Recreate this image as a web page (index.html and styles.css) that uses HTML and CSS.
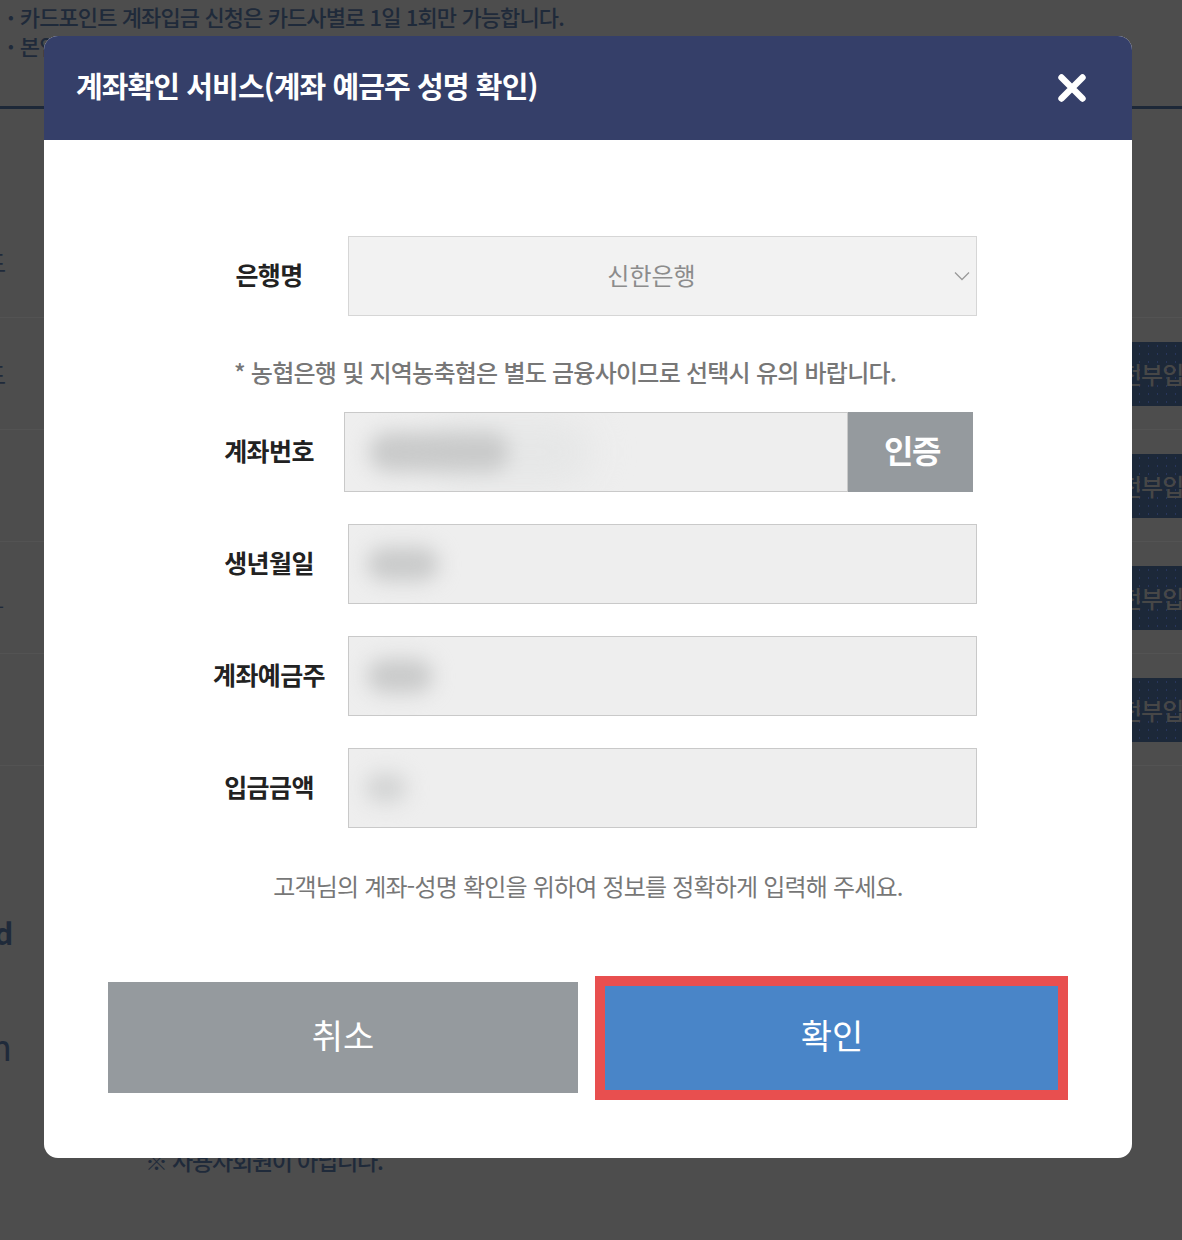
FILE: index.html
```html
<!DOCTYPE html>
<html lang="ko">
<head>
<meta charset="utf-8">
<title>계좌확인 서비스</title>
<link rel="stylesheet" href="styles.css">
</head>
<body>
<div class="page">
  <ul class="notice">
    <li>카드포인트 계좌입금 신청은 카드사별로 1일 1회만 가능합니다.</li>
    <li>본인 명의의 계좌로만 입금이 가능합니다.</li>
  </ul>
  <div class="divider"></div>
  <div class="rows">
    <div class="row"><span class="frag">코드</span></div>
    <div class="row"><span class="frag">코드</span><span class="pbtn">전부입금</span></div>
    <div class="row"><span class="pbtn">전부입금</span></div>
    <div class="row"><span class="frag frag-dash">-</span><span class="pbtn">전부입금</span></div>
    <div class="row"><span class="pbtn">전부입금</span></div>
  </div>
  <div class="lower">
    <p class="lower-d">d</p>
    <p class="lower-n">n</p>
    <p class="lower-note">※ 사용자회원이 아닙니다.</p>
  </div>
</div>

<div class="modal" role="dialog" aria-labelledby="modal-title">
  <div class="modal-head">
    <h2 class="modal-title" id="modal-title">계좌확인 서비스(계좌 예금주 성명 확인)</h2>
    <button class="close" type="button" aria-label="닫기">
      <svg width="30" height="30" viewBox="0 0 30 30"><path d="M4.5 4.5 L25.5 25.5 M25.5 4.5 L4.5 25.5" stroke="#fff" stroke-width="6.4" stroke-linecap="round" fill="none"/></svg>
    </button>
  </div>
  <div class="modal-body">
    <div class="form">
      <div class="frow">
        <label class="flabel">은행명</label>
        <div class="select">
          <span class="select-text">신한은행</span>
          <svg class="chev" width="16" height="10" viewBox="0 0 16 10"><polyline points="1,1.5 8,8.5 15,1.5" fill="none" stroke="#9a9a9a" stroke-width="1.3"/></svg>
        </div>
      </div>
      <p class="fnote">* 농협은행 및 지역농축협은 별도 금융사이므로 선택시 유의 바랍니다.</p>
      <div class="frow">
        <label class="flabel">계좌번호</label>
        <div class="field-acct">
          <div class="input"><span class="blur blur-acct"></span></div>
          <button class="verify" type="button">인증</button>
        </div>
      </div>
      <div class="frow frow-gap">
        <label class="flabel">생년월일</label>
        <div class="input input-full"><span class="blur blur-birth"></span></div>
      </div>
      <div class="frow frow-gap">
        <label class="flabel">계좌예금주</label>
        <div class="input input-full"><span class="blur blur-holder"></span></div>
      </div>
      <div class="frow frow-gap">
        <label class="flabel">입금금액</label>
        <div class="input input-full"><span class="blur blur-amount"></span></div>
      </div>
    </div>
    <p class="info">고객님의 계좌-성명 확인을 위하여 정보를 정확하게 입력해 주세요.</p>
    <div class="actions">
      <button class="btn btn-cancel" type="button">취소</button>
      <div class="confirm-wrap">
        <button class="btn btn-confirm" type="button">확인</button>
        <span class="highlight"></span>
      </div>
    </div>
  </div>
</div>
</body>
</html>
```

FILE: styles.css
```css
* { box-sizing: border-box; }
html, body { margin: 0; padding: 0; }
body {
  width: 1182px;
  height: 1240px;
  overflow: hidden;
  position: relative;
  background: #4d4d4d;
  font-family: "Noto Sans CJK KR", "Noto Sans", sans-serif;
}

/* dimmed page behind the dialog */
.page { color: #1f2a3a; }
.notice {
  list-style: none;
  margin: 0;
  padding: 2px 0 0 8px;
  font-size: 22px;
  line-height: 29px;
  letter-spacing: -0.9px;
  font-weight: 500;
}
.notice li { height: 29px; white-space: nowrap; }
.notice li::before { content: "•"; margin-right: 7px; font-size: 16px; line-height: 1; vertical-align: 3px; }
.divider { margin-top: 46px; height: 3px; background: #1d2838; }
.rows { margin-top: 97px; }
.row {
  height: 112px;
  border-bottom: 1px solid #535353;
  display: flex;
  align-items: center;
  overflow: hidden;
}
.frag { margin-left: -37px; font-size: 24px; line-height: 30px; letter-spacing: -1px; }
.frag-dash { margin-left: -3px; font-size: 20px; padding-top: 18px; }
.pbtn {
  margin-left: auto;
  margin-right: -60px;
  width: 170px;
  height: 64px;
  padding-left: 48px;
  display: flex;
  align-items: center;
  background-color: #1c2839;
  background-image: radial-gradient(#28365c 0.6px, transparent 0.9px);
  background-size: 9px 8px;
  color: #474747;
  font-size: 24px;
  letter-spacing: -1px;
  font-weight: 500;
}
.lower p { margin: 0; }
.lower-d { margin-top: 146px !important; height: 40px; line-height: 40px; font-size: 30px; font-weight: 700; margin-left: -6px !important; }
.lower-n { margin-top: 73px !important; height: 40px; line-height: 40px; font-size: 36px; margin-left: -10px !important; }
.lower-note { margin-top: 77px !important; margin-left: 145px !important; font-size: 23px; line-height: 36px; letter-spacing: -1.2px; font-weight: 500; }

/* dialog */
.modal {
  position: absolute;
  left: 44px;
  top: 36px;
  width: 1088px;
  background: #fff;
  border-radius: 14px;
  overflow: hidden;
}
.modal-head {
  height: 104px;
  background: #353f69;
  display: flex;
  align-items: center;
  justify-content: space-between;
  padding: 0 45px 0 32px;
}
.modal-title {
  margin: 0 0 6px;
  color: #fff;
  font-size: 29px;
  line-height: 40px;
  font-weight: 700;
  letter-spacing: -0.9px;
}
.close {
  width: 30px;
  height: 30px;
  padding: 0;
  border: 0;
  background: none;
  display: block;
}
.close svg { display: block; }

.modal-body { padding: 96px 0 65px; }
.form { width: 787px; margin-left: 146px; }
.frow { display: flex; align-items: center; height: 80px; }
.frow-gap { margin-top: 32px; }
.flabel {
  width: 158px;
  flex: none;
  text-align: center;
  font-size: 25px;
  font-weight: 700;
  letter-spacing: -0.6px;
  color: #222;
  line-height: 34px;
  padding-bottom: 4px;
}
.select {
  flex: 1;
  height: 80px;
  background: #f2f2f2;
  border: 1px solid #d6d6d6;
  display: grid;
  grid-template-columns: 1fr 16px;
  align-items: center;
  padding-right: 6px;
}
.select-text {
  text-align: center;
  font-size: 24px;
  line-height: 34px;
  letter-spacing: 0;
  color: #8c8c8c;
  padding-bottom: 3px;
}
.chev { display: block; }
.fnote {
  margin: 38px 0 22px;
  padding-left: 44px;
  font-size: 24px;
  line-height: 36px;
  font-weight: 500;
  letter-spacing: -0.75px;
  color: #777;
}
.field-acct {
  flex: 1;
  display: flex;
  height: 80px;
  margin-left: -4px;
  margin-right: 4px;
}
.input {
  flex: 1;
  height: 80px;
  background: #eeeeee;
  border: 1px solid #c9c9c9;
  display: flex;
  align-items: center;
  overflow: hidden;
}
.verify {
  width: 125px;
  flex: none;
  height: 80px;
  border: 0;
  background: #959a9e;
  color: #fff;
  font-family: inherit;
  font-size: 32px;
  font-weight: 700;
  letter-spacing: -1.5px;
  padding: 0 0 6px 3px;
}
.blur {
  display: block;
  background: #c9caca;
  border-radius: 22px;
  filter: blur(10px);
}
.blur-acct { width: 140px; height: 40px; margin-left: 24px; box-shadow: 70px 0 30px 14px #e6e7e7; }
.blur-birth { width: 72px; height: 34px; margin-left: 18px; }
.blur-holder { width: 66px; height: 34px; margin-left: 18px; }
.blur-amount { width: 42px; height: 30px; margin-left: 16px; background: #d3d4d4; }

.info {
  margin: 40px 0 0;
  text-align: center;
  font-size: 24px;
  line-height: 36px;
  letter-spacing: -0.8px;
  color: #777;
}
.actions {
  margin-top: 78px;
  display: flex;
  gap: 19px;
  padding-left: 64px;
}
.btn {
  width: 470px;
  height: 111px;
  border: 0;
  color: #fff;
  font-family: inherit;
  font-size: 34px;
  letter-spacing: 0;
  padding: 0 0 6px;
}
.btn-cancel { background: #959a9e; }
.btn-confirm { background: #4985c8; display: block; }
.confirm-wrap { position: relative; width: 470px; }
.highlight {
  position: absolute;
  top: -6px;
  left: -2px;
  right: -1px;
  bottom: -7px;
  border: 10px solid #e84f4f;
  pointer-events: none;
}
```
